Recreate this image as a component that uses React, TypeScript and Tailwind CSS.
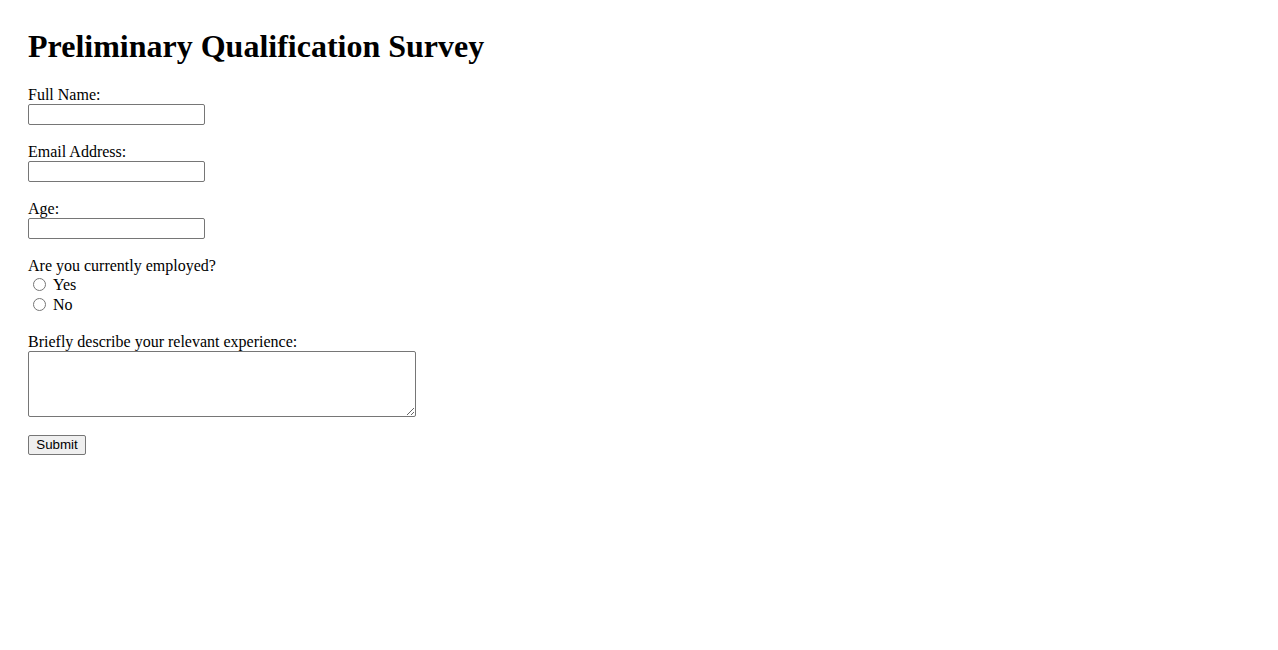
export default function App() {
  const fieldClass =
    "block h-[21px] w-[177px] rounded-[2px] border border-[#767676] bg-white px-[2px] py-[1px] text-[13.33px] [font-family:'Liberation_Sans',Arial,sans-serif]";

  return (
    <div className="min-h-screen bg-white px-[28px] pt-[28px] text-[16px] text-black [font-family:'Liberation_Serif','Times_New_Roman',serif]">
      <h1 className="mb-[21px] text-[32px] font-bold leading-[37px]">
        Preliminary Qualification Survey
      </h1>

      <form onSubmit={(e) => e.preventDefault()}>
        <div className="mb-[18px]">
          <label htmlFor="fullName" className="block leading-[18px]">
            Full Name:
          </label>
          <input id="fullName" type="text" className={fieldClass} />
        </div>

        <div className="mb-[18px]">
          <label htmlFor="email" className="block leading-[18px]">
            Email Address:
          </label>
          <input id="email" type="email" className={fieldClass} />
        </div>

        <div className="mb-[18px]">
          <label htmlFor="age" className="block leading-[18px]">
            Age:
          </label>
          <input id="age" type="number" className={fieldClass} />
        </div>

        <div className="mb-[18px]">
          <p className="leading-[18px]">Are you currently employed?</p>
          <label className="flex h-[20px] items-start">
            <input
              type="radio"
              name="employed"
              value="yes"
              className="mt-[3px] mr-[3px] ml-[5px] h-[13px] w-[13px]"
            />
            <span className="ml-[4px] leading-[20px]">Yes</span>
          </label>
          <label className="flex h-[20px] items-start">
            <input
              type="radio"
              name="employed"
              value="no"
              className="mt-[3px] mr-[3px] ml-[5px] h-[13px] w-[13px]"
            />
            <span className="ml-[4px] leading-[20px]">No</span>
          </label>
        </div>

        <div className="mb-[18px]">
          <label htmlFor="experience" className="block leading-[18px]">
            Briefly describe your relevant experience:
          </label>
          <textarea
            id="experience"
            className="block h-[66px] w-[388px] rounded-[2px] border border-[#767676] bg-white px-[2px] py-[2px] text-[13.33px] [font-family:'Liberation_Mono',monospace]"
          />
        </div>

        <button
          type="submit"
          className="block h-[20px] w-[58px] rounded-[2px] border border-[#767676] bg-[#efefef] px-[6px] text-[13.33px] leading-[16px] text-black [font-family:'Liberation_Sans',Arial,sans-serif]"
        >
          Submit
        </button>
      </form>
    </div>
  );
}
